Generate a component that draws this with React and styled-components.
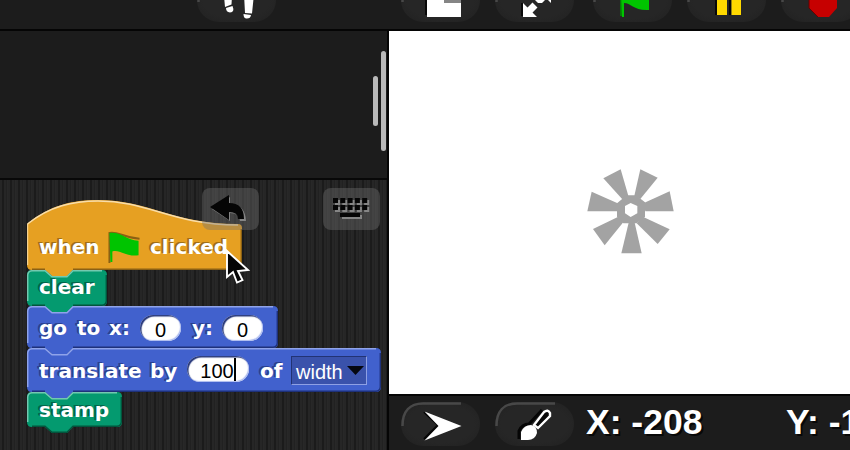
import React from "react";
import styled, { createGlobalStyle } from "styled-components";

const Global = createGlobalStyle`
  * { box-sizing: border-box; }
  body { margin: 0; background: #1c1c1c; overflow: hidden; }
`;

const Window = styled.div`
  width: 850px;
  height: 450px;
  overflow: hidden;
  display: grid;
  grid-template: 31px 419px / 389px 461px;
  background: #1c1c1c;
`;

const Toolbar = styled.header`
  grid-column: 1 / -1;
  display: flex;
  align-items: flex-end;
  gap: 15px;
  padding: 0 0 7px 197px;
  border-bottom: 2px solid #050505;
  overflow: hidden;
`;

const Pill = styled.div`
  flex: none;
  width: 79px;
  height: 44px;
  margin-right: ${(p) => p.$after || 0}px;
  border-radius: 22px;
  background: radial-gradient(ellipse at center, #262626 60%, #202020 100%);
`;

const PillArt = styled.svg`
  display: block;
  width: 79px;
  height: 44px;
  overflow: visible;
`;

const Left = styled.section`
  display: grid;
  grid-template-rows: 149px 270px;
  border-right: 2px solid #050505;
`;

const Palette = styled.div`
  display: flex;
  justify-content: flex-end;
  gap: 3px;
  padding: 20px 1px 0 0;
  border-bottom: 2px solid #080808;
`;

const Scrollbar = styled.div`
  width: 5px;
  height: ${(p) => p.$h}px;
  margin-top: ${(p) => p.$top}px;
  border-radius: 3px;
  background: #b9b9b9;
`;

const Scripts = styled.div`
  position: relative;
  overflow: hidden;
  background: repeating-linear-gradient(
    90deg,
    #262626 0 2px,
    #1b1b1b 2px 4px,
    #262626 4px 6px,
    #212121 6px 7px,
    #282828 7px 8px
  );
`;

const Stack = styled.div`
  position: absolute;
  left: 27px;
  top: 20px;
  display: flex;
  flex-direction: column;
  align-items: flex-start;
`;

const BlockRow = styled.div`
  position: relative;
  display: flex;
  align-items: flex-start;
  width: ${(p) => p.$w}px;
  height: ${(p) => p.$h}px;
  padding: ${(p) => p.$pad}px 0 0 12px;
`;

const Shape = styled.svg`
  position: absolute;
  left: 0;
  top: 0;
  overflow: visible;
`;

const Word = styled.span`
  position: relative;
  flex: none;
  width: ${(p) => p.$w}px;
  font: bold 20px/24px "DejaVu Sans", Verdana, sans-serif;
  white-space: pre;
  color: #fff;
  text-shadow: -1px -1px 0 ${(p) => p.$shade}, -2px -1px 0 ${(p) => p.$shade};
`;

const NumberSlot = styled.span`
  position: relative;
  flex: none;
  display: flex;
  align-items: center;
  justify-content: center;
  width: ${(p) => p.$w}px;
  height: 26px;
  margin: ${(p) => p.$mt}px ${(p) => p.$mr}px 0 -1px;
  padding-top: 3px;
  border-radius: 13px;
  background: #fff;
  box-shadow: inset 1.5px 1.5px 1px #26377a, inset -1px -1px 1px #a9b8ee;
  font: 20px/24px "Liberation Sans", Arial, sans-serif;
  color: #000;
`;

const Caret = styled.i`
  width: 2px;
  height: 23px;
  margin-top: -3px;
  background: #000;
`;

const Dropdown = styled.span`
  position: relative;
  flex: none;
  display: flex;
  align-items: center;
  justify-content: space-between;
  width: 76px;
  height: 29px;
  margin-top: -3px;
  padding: 3px 2px 0 4px;
  background: #3a52ab;
  border: 1.5px solid;
  border-color: #223374 #8ea0e4 #8ea0e4 #223374;
  font: 20px/24px "Liberation Sans", Arial, sans-serif;
  color: #fff;
`;

const Triangle = styled.svg`
  width: 17px;
  height: 9px;
  margin-bottom: 3px;
`;

const FlagIcon = styled.svg`
  position: relative;
  flex: none;
  width: 32px;
  height: 33px;
  margin: -4px 10px 0 8px;
`;

const ToolButton = styled.div`
  position: absolute;
  top: 8px;
  left: ${(p) => p.$x}px;
  width: 57px;
  height: 42px;
  border-radius: 8px;
  background: rgba(112, 112, 112, 0.4);
`;

const Pointer = styled.svg`
  position: absolute;
  left: 224px;
  top: 68px;
  overflow: visible;
`;

const Right = styled.section`
  display: grid;
  grid-template-rows: 363px 56px;
`;

const Stage = styled.div`
  background: #fff;
  padding: 129px 0 0 186px;
`;

const Status = styled.footer`
  display: flex;
  align-items: flex-start;
  border-top: 2px solid #050505;
  padding: 6px 0 0 12px;
  gap: 15px;
  overflow: hidden;
`;

const Coordinate = styled.span`
  flex: none;
  width: ${(p) => p.$w}px;
  margin-left: -3px;
  white-space: pre;
  font: bold 36px/40px "Liberation Sans", Arial, sans-serif;
  font-size: 35.5px;
  transform: scaleY(0.97);
  color: #fff;
  text-shadow: 2px 2px 0 #080808;
`;

const palette = {
  gold: { fill: "#e6a022", light: "#f8ddaa", dark: "#8a6014", shade: "#a06f18" },
  green: { fill: "#049a6f", light: "#73c9b0", dark: "#02553d", shade: "#026548" },
  blue: { fill: "#4161cd", light: "#8fa3ea", dark: "#1e317a", shade: "#2a4090" },
};

function Block({ tone, w, h, pad, hat, last, children }) {
  const c = palette[tone];
  const tab = `L46 ${h} L40 ${h + 6} L25 ${h + 6} L18 ${h} L5 ${h} Q0 ${h} 0 ${h - 5}`;
  const top = hat
    ? `M0.5 24 C23 6 46 1 71 1 C122 1 145 25 ${w - 4} 25`
    : `M0.7 ${h - 5} L0.7 5 Q1 1 5 0.7 L18 0.7 L25 6.7 L40 6.7 L46 0.7 L${w - 5} 0.7`;
  const body = hat
    ? `M0 24 C23 5 46 0 71 0 C122 0 145 24 ${w - 4} 24 Q${w} 24 ${w} 28 L${w} ${h - 4} Q${w} ${h} ${w - 4} ${h} ${tab} Z`
    : `M0 5 Q0 0 5 0 L18 0 L25 6 L40 6 L46 0 L${w - 5} 0 Q${w} 0 ${w} 5 L${w} ${h - 5} Q${w} ${h} ${w - 5} ${h} ${tab} Z`;
  const underside = last
    ? `L46 ${h - 0.7} L40 ${h + 5.3} L25 ${h + 5.3} L18 ${h - 0.7} L5 ${h - 0.7}`
    : `L46 ${h - 0.7} M18 ${h - 0.7} L5 ${h - 0.7}`;
  return (
    <BlockRow $w={w} $h={h} $pad={pad}>
      <Shape width={w} height={h + 7} fill="none">
        <path d={body} fill={c.fill} />
        <path d={top} stroke={c.light} strokeWidth="1.5" />
        {hat && <path d={`M.7 24V${h - 5}`} stroke={c.light} strokeWidth="1" />}
        <path
          d={`M${w - 0.7} ${hat ? 29 : 5} V${h - 5} Q${w - 1} ${h - 1} ${w - 5} ${h - 0.7} ${underside}`}
          stroke={c.dark}
          strokeWidth="1.4"
        />
      </Shape>
      {children}
    </BlockRow>
  );
}

function Button({ after, children }) {
  return (
    <Pill $after={after}>
      <PillArt viewBox="0 0 79 44" fill="none">
        <path d="M1.5 24 C1.5 9 9 1.5 22 1.5 H60" stroke="#484848" strokeWidth="2.5" />
        {children}
      </PillArt>
    </Pill>
  );
}

const blades = [
  "M85 55 L137 28 L160 107 L142 118 Z",
  "M196 28 L248 53 L196 117 L178 107 Z",
  "M284 94 L296 154 L211 154 L205 130 Z",
  "M284 208 L248 252 L185 190 L205 171 Z",
  "M139 280 L161 188 L179 188 L200 280 Z",
  "M54 207 L89 256 L146 185 L130 170 Z",
  "M50 95 L37 154 L128 154 L133 132 Z",
];

const keys = [0, 1].flatMap((row) => [0, 1, 2, 3, 4].map((col) => [10 + col * 7.3, 10 + row * 7]));

export default function App() {
  return (
    <>
      <Global />
      <Window>
        <Toolbar>
          <Button after={110}>
            <path d="M27 18 L35 18 L34.5 26.5 L28 29 Z M47 16 H57 L55 35.5 L48 35 Z" fill="#fff" />
            <path d="M29 30 L35.5 28 Q38 34 33 34.5 Q29 34 29 30Z M46.5 36 L54 37 Q53.5 41 49 40.5 Q46.5 40 46.5 36Z" fill="#fff" />
          </Button>
          <Button>
            <path d="M24 14V37H27V14Z" fill="#080808" />
            <path d="M26 10H60V39H26Z" fill="#fff" />
            <path d="M43 10H60V25H43Z" fill="#858585" />
          </Button>
          <Button after={4}>
            <path d="M27 38V25 M42 22L51 13" stroke="#080808" strokeWidth="2" />
            <path d="M28 39V25L32.5 29.5L37.5 24.5L42.5 29.5L37.5 34.5L42 39Z M43 25L38 20L46 12H56V25L51.5 20.5L47 25Z" fill="#fff" />
          </Button>
          <Button>
            <path d="M28 38V15" stroke="#067a06" strokeWidth="2" />
            <path d="M28 16 C39 16 39 22 56 20 V32 C41 33 38 25 31 25 V39 H29Z" fill="#00c400" />
          </Button>
          <Button>
            <path d="M29 10V37M43 10V37" stroke="#080808" strokeWidth="2" />
            <path d="M30 10H40V37H30Z M44.500 10H54V37H44.500Z" fill="#ffd900" />
          </Button>
          <Button>
            <path d="M28 18 H56 V30 L48 39 H37 L28 30Z" fill="#c60000" />
            <path d="M28 22 V30 L37 39" stroke="#650000" />
          </Button>
        </Toolbar>

        <Left>
          <Palette>
            <Scrollbar $h={50} $top={25} />
            <Scrollbar $h={100} $top={0} />
          </Palette>
          <Scripts>
            <Stack>
              <Block tone="gold" w={215} h={70} pad={35} hat>
                <Word $w={61} $shade={palette.gold.shade}>when</Word>
                <FlagIcon viewBox="0 0 32 34">
                  <path d="M1 33V2 C10 0 15 7 32 8" fill="none" stroke="#8a6014" strokeWidth="2" />
                  <path d="M1 2 C15 1 18 10 31 10 V25 C17 27 13 19 4 21 V32 H2Z" fill="#00c400" />
                </FlagIcon>
                <Word $w={80} $shade={palette.gold.shade}>clicked</Word>
              </Block>
              <Block tone="green" w={80} h={36} pad={5}>
                <Word $w={56} $shade={palette.green.shade}>clear</Word>
              </Block>
              <Block tone="blue" w={251} h={42} pad={10}>
                <Word $w={38} $shade={palette.blue.shade}>go</Word>
                <Word $w={32} $shade={palette.blue.shade}>to</Word>
                <Word $w={32} $shade={palette.blue.shade}>x:</Word>
                <NumberSlot $w={41} $mr={11} $mt={-1}>0</NumberSlot>
                <Word $w={31} $shade={palette.blue.shade}>y:</Word>
                <NumberSlot $w={41} $mr={0} $mt={-1}>0</NumberSlot>
              </Block>
              <Block tone="blue" w={354} h={44} pad={11}>
                <Word $w={111} $shade={palette.blue.shade}>translate</Word>
                <Word $w={38} $shade={palette.blue.shade}>by</Word>
                <NumberSlot $w={62} $mr={11} $mt={-3}>100<Caret /></NumberSlot>
                <Word $w={31} $shade={palette.blue.shade}>of</Word>
                <Dropdown>
                  width
                  <Triangle viewBox="0 0 17 9"><path d="M0 0H17L8.5 9Z" fill="#05070f" /></Triangle>
                </Dropdown>
              </Block>
              <Block tone="green" w={95} h={35} pad={6} last>
                <Word $w={70} $shade={palette.green.shade}>stamp</Word>
              </Block>
            </Stack>
            <ToolButton $x={202}>
              <svg width="57" height="42">
                <path d="M10 21 L28 9 V16 Q43 16 44 33 H38 Q37 25 28 25 V33Z" fill="#858585" />
                <path d="M8 19 L27 7 V15 Q42 15 42 31 H36 Q36 24 27 24 V32Z" fill="#050505" />
              </svg>
            </ToolButton>
            <ToolButton $x={323}>
              <svg width="57" height="42">
                {keys.map(([x, y]) => <rect key={`s${x}-${y}`} x={x + 2} y={y + 2} width="5" height="5" fill="#858585" />)}
                <path d="M19 27H39V31H19Z" fill="#858585" />
                {keys.map(([x, y]) => <rect key={`${x}-${y}`} x={x} y={y} width="5" height="5" fill="#050505" />)}
                <path d="M17 25H37V29H17Z" fill="#050505" />
              </svg>
            </ToolButton>
            <Pointer width="26" height="36">
              <path d="M3 3 V29 L9 24 L13 34.500 L18.500 32 L14 23 L24 22Z" fill="#050505" stroke="#fff" strokeWidth="1.9" />
            </Pointer>
          </Scripts>
        </Left>

        <Right>
          <Stage>
            <svg width="110" height="105" viewBox="0 0 330 315">
              <g fill="#a3a3a3">
                {blades.map((d) => <path key={d} d={d} />)}
                <path fillRule="evenodd" d="M155 106 H183 L210 127 V171 L185 190 H145 L126 170 V130Z M167 129 L150 138 V160 L167 171 L187 160 V138Z" />
              </g>
            </svg>
          </Stage>
          <Status>
            <Button>
              <path d="M23 10 L37 23 L23 37" stroke="#050505" strokeWidth="2" />
              <path d="M23.500 9.500 L60.500 24 L23.500 38.500 L37.500 24Z" fill="#fff" />
            </Button>
            <Button>
              <path d="M24 37 V29 Q27 22 34 22 L47 8" stroke="#050505" strokeWidth="3" />
              <path d="M26 38 V30 Q29 23 36 23 Q42 24 42 31 Q40 38 33 38Z" fill="#fff" />
              <path d="M39 23 L49 10 Q53 7 55 11 L55 14 L43 26Z" fill="#080808" stroke="#fff" strokeWidth="2.4" />
            </Button>
            <Coordinate $w={188}>X: -208</Coordinate>
            <Coordinate $w={80}>Y: -1</Coordinate>
          </Status>
        </Right>
      </Window>
    </>
  );
}
